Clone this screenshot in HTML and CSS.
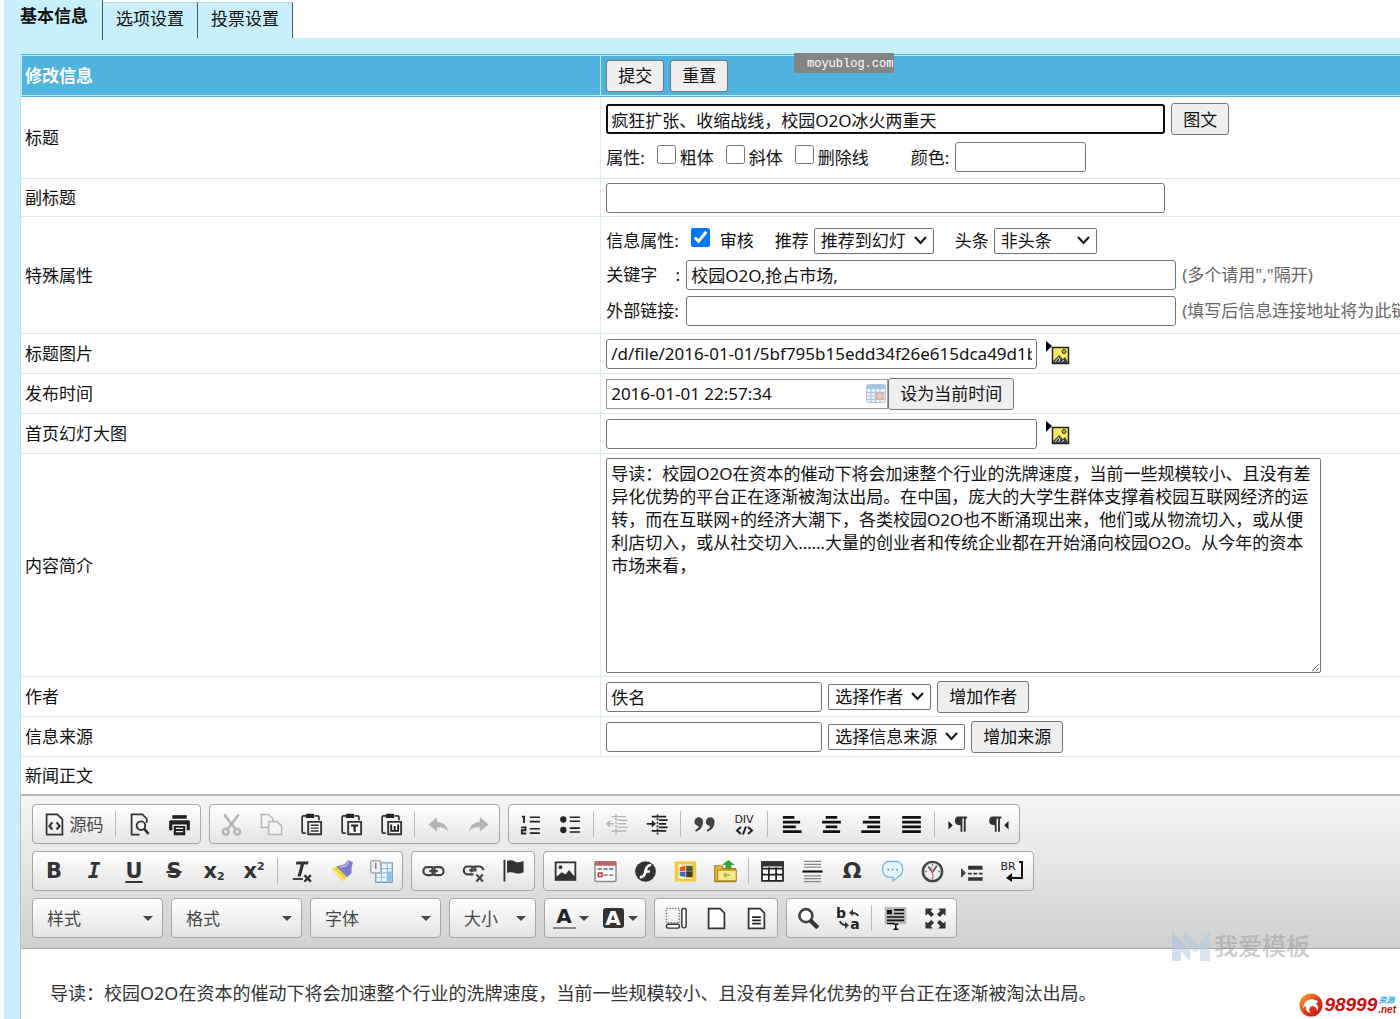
FILE: index.html
```html
<!DOCTYPE html>
<html lang="zh-CN">
<head>
<meta charset="utf-8">
<title>修改信息</title>
<link rel="stylesheet" href="styles.css">
</head>
<body>
<svg class="sprite" aria-hidden="true">
  <defs>
    <linearGradient id="g-ball" x1="0" y1="0" x2="1" y2="1"><stop offset="0" stop-color="#f9b233"/><stop offset=".5" stop-color="#e2401b"/><stop offset="1" stop-color="#b50d12"/></linearGradient>
  </defs>
  <symbol id="source" viewBox="0 0 16 16"><path d="M2.500 1h7.500L13.500 4.500V15h-11z" fill="none" stroke="#333" stroke-width="1.200"/><path d="M6.500 6.500L4.500 9l2 2.500M9.500 6.500l2 2.500-2 2.500" fill="none" stroke="#333" stroke-width="1.500"/></symbol>
  <symbol id="preview" viewBox="0 0 16 16"><path d="M8 15H2.500V1H10l3 3v3" fill="none" stroke="#333" stroke-width="1.200"/><circle cx="9" cy="8.800" r="3" fill="none" stroke="#333" stroke-width="1.300"/><path d="M11.300 11l3 3.500" stroke="#333" stroke-width="1.800"/></symbol>
  <symbol id="print" viewBox="0 0 16 16"><path d="M3 1.500h10V4H3z" fill="#222"/><path d="M1.500 5h13l.7.700V12H13V8H3v4H.8V5.700z" fill="#222"/><path d="M4 9h8v6.500H4z" fill="#222"/><path d="M5.500 10.700h5M5.500 13h5" stroke="#eee" stroke-width=".9"/></symbol>
  <symbol id="cut" viewBox="0 0 16 16"><g fill="none" stroke="#b5b5b5" stroke-width="1.800"><path d="M3 1l7.500 10M13 1L5.500 11"/><circle cx="4" cy="13" r="2"/><circle cx="12" cy="13" r="2"/></g></symbol>
  <symbol id="copy" viewBox="0 0 16 16"><g fill="#f5f5f5" stroke="#b9b9b9" stroke-width="1.100"><path d="M1 10V1h5l3 3v6z"/><path d="M6 6h6l3 3v6H6z"/></g></symbol>
  <symbol id="clip" viewBox="0 0 16 16"><path d="M4 2H2.500Q1.500 2 1.500 3v10q0 1 1 1H4M10.500 2h1.500q1.200 0 1.200 1v2" fill="none" stroke="#333" stroke-width="1.200"/><path d="M4 3.500V1.500Q4 .5 5 .5h4q1 0 1 1v2z" fill="#222"/><path d="M5.700 6.200h9v8.600h-9z" fill="#f7f7f7" stroke="#333" stroke-width="1.300"/></symbol>
  <symbol id="paste" viewBox="0 0 16 16"><use href="#clip"/><path d="M7.500 8.500h5.500M7.500 10.500h5.500M7.500 12.500h5.500" stroke="#333"/></symbol>
  <symbol id="paste-text" viewBox="0 0 16 16"><use href="#clip"/><path d="M7.700 8.700h5M10.200 8.700v4.300" stroke="#222" stroke-width="1.500"/></symbol>
  <symbol id="paste-word" viewBox="0 0 16 16"><use href="#clip"/><path d="M7.800 8v4.400h4.800V8M10.200 9v3" stroke="#222" fill="none" stroke-width="1.300"/></symbol>
  <symbol id="undo" viewBox="0 0 16 16"><path d="M1 8l6-5v3q6 0 8 7-3-3.500-8-3v3z" fill="#b5b5b5"/></symbol>
  <symbol id="redo" viewBox="0 0 16 16"><path d="M15 8L9 3v3Q3 6 1 13q3-3.500 8-3v3z" fill="#b5b5b5"/></symbol>
  <symbol id="ol" viewBox="0 0 16 16"><path d="M2 2.500h1.500V7M1.500 10h3v2H2v2.300h3" fill="none" stroke="#222" stroke-width="1.300"/><path d="M7.500 3h7M7.500 6h7M7.500 11h7M7.500 14h7" stroke="#222" stroke-width="1.100"/></symbol>
  <symbol id="ul" viewBox="0 0 16 16"><circle cx="3" cy="4.500" r="2.200" fill="#222"/><circle cx="3" cy="11.800" r="2.200" fill="#222"/><path d="M7.500 3h7M7.500 5.700h7M7.500 10.500h7M7.500 13.200h7" stroke="#222" stroke-width="1.100"/></symbol>
  <symbol id="outdent" viewBox="0 0 16 16"><path d="M7 1v14" stroke="#b5b5b5" stroke-width="1.200" stroke-dasharray="1.500 1"/><path d="M4 2.500h10M8 5h7M8 7.500h6M8 10h7M4 12.500h10M.5 7.500h5M3 5.500l-2.500 2 2.500 2" fill="none" stroke="#b5b5b5"/></symbol>
  <symbol id="indent" viewBox="0 0 16 16"><path d="M8 1v14" stroke="#333" stroke-width="1.200" stroke-dasharray="1.500 1"/><path d="M4 2.500h10M9 5h6M9 7.500h5M9 10h6M4 12.500h10M.5 7.500h5" stroke="#222" stroke-width="1.200"/><path d="M4 5l3 2.500L4 10z" fill="#222"/></symbol>
  <symbol id="quote" viewBox="0 0 16 16"><path id="q1" d="M4 3a3 3 0 0 1 3 3q0 5-5 7l-.5-1Q4 10.500 4 9a3 3 0 0 1 0-6z" fill="#444"/><use href="#q1" x="8"/></symbol>
  <symbol id="left" viewBox="0 0 16 16"><path d="M2 3h8M2 6.300h12M2 9.600h9M2 13h13" stroke="#111" stroke-width="1.900"/></symbol>
  <symbol id="center" viewBox="0 0 16 16"><path d="M4 3h8M1.500 6.300h13M4 9.600h8M2 13h12" stroke="#111" stroke-width="1.900"/></symbol>
  <symbol id="right" viewBox="0 0 16 16"><path d="M6 3h8M2 6.300h12M5 9.600h9M1 13h13" stroke="#111" stroke-width="1.900"/></symbol>
  <symbol id="justify" viewBox="0 0 16 16"><path d="M1.500 3h13M1.500 6.300h13M1.500 9.600h13M1.500 13h13" stroke="#111" stroke-width="1.900"/></symbol>
  <symbol id="para" viewBox="0 0 16 16"><path d="M7.500 2.500H14v1.300h-1V13h-1.300V3.800h-1V13H9.400V8.500Q5.500 8.500 5.500 5.500 5.500 3 7.500 2.500z" fill="#333"/></symbol>
  <symbol id="ltr" viewBox="0 0 16 16"><use href="#para"/><path d="M1 5.500l3 3-3 3z" fill="#222"/></symbol>
  <symbol id="rtl" viewBox="0 0 16 16"><use href="#para" x="-4"/><path d="M15 5.500l-3 3 3 3z" fill="#222"/></symbol>
  <symbol id="clear" viewBox="0 0 16 16"><path d="M4.500 1h8.500l-.6 2.200H9.800L7.500 11.500H5.200l2.300-8.300H4z" fill="#333"/><path d="M2 13.200h7" stroke="#333" stroke-width="1.300"/><path d="M10 10.500l4.500 4.500M14.500 10.500L10 15" stroke="#333" stroke-width="1.600"/></symbol>
  <symbol id="brush" viewBox="0 0 16 16"><path d="M1 6l8 9 3-4-6-7z" fill="#f6cf2a"/><path d="M1 6l8 9 1-1.500L3 5.500z" fill="#fbe873"/><path d="M4.500 4.500L10 3l2.500-3L16 1.500 15 5v4l-3 3z" fill="#7f7dc9"/><path d="M7 5l4-1 2-3" stroke="#b6b5ea" stroke-width="1.300" fill="none"/></symbol>
  <symbol id="template" viewBox="0 0 16 16"><path d="M4 2h11.500v13.500H4z" fill="#f2f9ff" stroke="#72a5c9"/><path d="M4 6h11M4 9h11M4 12h11M8 3v12M12 3v12" stroke="#8dc1e4" stroke-width=".8"/><path d="M12 8h3v7h-3z" fill="#88c1ee"/><rect x=".5" y=".5" width="7" height="8.500" rx="1" fill="#eee" stroke="#aaa"/><path d="M4 2v4" stroke="#777"/></symbol>
  <symbol id="link" viewBox="0 0 16 16"><g fill="none" stroke="#444" stroke-width="1.500"><rect x="1" y="5" width="8" height="5.500" rx="2.700"/><rect x="7" y="5" width="8" height="5.500" rx="2.700"/><path d="M5 7.700h6"/></g></symbol>
  <symbol id="unlink" viewBox="0 0 16 16"><g fill="none" stroke="#444" stroke-width="1.500"><path d="M8 10H4a2.600 2.600 0 0 1 0-5.500h3a2.600 2.600 0 0 1 2.500 2.700M7 8.500a2.600 2.600 0 0 1 2-4h3.500q2.300.5 2.300 2.700M5 7.200h5"/><path d="M10 10l4.500 5M14.500 10L10 15"/></g></symbol>
  <symbol id="flag" viewBox="0 0 16 16"><path d="M1.700 0v15" stroke="#333" stroke-width="1.300"/><path d="M3.500.5q3-1 5.500.5t6-.5v8q-3 1.500-6 .5t-5.500 0z" fill="#333"/></symbol>
  <symbol id="image" viewBox="0 0 16 16"><path d="M.5 1h15v13.500H.5z" fill="#333"/><path d="M1.800 2.300h12.400v9.200L10.500 7 8 10 5.500 8.500l-3.700 3z" fill="#f5f5f5"/><circle cx="4.500" cy="5" r="1.300" fill="#333"/></symbol>
  <symbol id="form" viewBox="0 0 16 16"><rect x=".7" y="1.200" width="14.600" height="13.800" rx="1" fill="#fafafa" stroke="#888"/><path d="M.5 1h15v3H.5z" fill="#b66"/><path d="M2.500 6.200h3M6.500 6.200h3M10.500 6.200h3M6.500 10.500h3M10.500 10.500h3" stroke="#667"/><path d="M3 9h2.500v2.500H3z" fill="none" stroke="#c33"/></symbol>
  <symbol id="flash" viewBox="0 0 16 16"><circle cx="8" cy="8" r="7.200" fill="#333"/><path d="M12 3.500q-3 0-3.800 3.500l-.5 2q-.7 3-3.700 3M7 8h4" fill="none" stroke="#fff" stroke-width="1.800"/></symbol>
  <symbol id="media" viewBox="0 0 16 16"><path d="M.5 1h15v14H.5z" fill="#f3c93b"/><path d="M3 3h10v10H3z" fill="#fdf3c6"/><path d="M4 5l4-1v3.500l-4 .5z" fill="#e6572c"/><path d="M8.500 4H13v4H8.500z" fill="#435f36"/><path d="M4 8.500l4-.5v4l-4-1z" fill="#3f6cc4"/><path d="M8.500 8H13v4H8.500z" fill="#453820"/></symbol>
  <symbol id="upload" viewBox="0 0 16 16"><path d="M.5 4h5l1 2h8.500v9H.5z" fill="#e9b934" stroke="#9b7a22" stroke-width=".8"/><path d="M2.500 7h13v7.500h-13z" fill="#fbe789" stroke="#b48d24" stroke-width=".8"/><path d="M8 5.500V3.500H5.500L10 0l4.500 3.500H12v2z" fill="#32a332"/><path d="M7 10.500h4M8.500 9L7 10.500 8.500 12" fill="none" stroke="#8ac35b" stroke-width="1.200"/></symbol>
  <symbol id="table" viewBox="0 0 16 16"><path d="M.7 1.500h14.600v13H.7zM.7 6h14.600M.7 10.200h14.600M5.500 5v9.500M10.500 5v9.500" fill="#fff" stroke="#222" stroke-width="1.200"/><path d="M.1 1h15.800v3.500H.1z" fill="#333"/></symbol>
  <symbol id="hr" viewBox="0 0 16 16"><path d="M2 1h12M2 3h12M2 5h12M2 11h12M2 13h12M2 15h12" stroke="#888" stroke-width=".8"/><path d="M1 8h14" stroke="#111" stroke-width="1.500"/></symbol>
  <symbol id="smile" viewBox="0 0 16 16"><path d="M4.500 1h7Q15 2.500 15 6.500T11.500 12l-3 2.500V12H5Q1 10.500 1 6.500T4.500 1z" fill="#e9f7fd" stroke="#7abcdc"/><path d="M4.500 6.700h1.200M7.500 6.700h1.200M10.500 6.700h1.200" stroke="#5b9fc0" stroke-width="1.200"/></symbol>
  <symbol id="clock" viewBox="0 0 16 16"><circle cx="8" cy="8" r="6.700" fill="#eee" stroke="#444" stroke-width="1.700"/><path d="M8 8.500L5 4.500M8 8.500L11 4" stroke="#555" stroke-width="1.100"/><path d="M7 5l1.500 7" stroke="#d77"/><path d="M8 2.500V4M8 12v1.500M2.500 8H4M12 8h1.500" stroke="#777"/></symbol>
  <symbol id="pagebreak" viewBox="0 0 16 16"><path d="M0 5.500L3.500 9 0 12.500z" fill="#444"/><path d="M5 4h10v2.800H5zM5 12h10v2.500H5z" fill="#333"/><path d="M5 9.400h2.500M8.700 9.400h2.600M12.500 9.400H15" stroke="#333" stroke-width="1.200"/></symbol>
  <symbol id="page" viewBox="0 0 16 16"><path d="M2.500 1.200h8l3 3v10.600h-11z" fill="#fff" stroke="#333" stroke-width="1.200"/></symbol>
  <symbol id="doc" viewBox="0 0 16 16"><use href="#page"/><path d="M5 7h6M5 9.300h6M5 11.600h6" stroke="#222" stroke-width="1.200"/></symbol>
  <symbol id="blocks" viewBox="0 0 16 16"><path d="M1 1h9v10H1z" fill="none" stroke="#777" stroke-dasharray="1 1"/><rect x="11.700" y="1" width="3" height="13.500" rx="1.200" fill="#fff" stroke="#333"/><rect x="1" y="12" width="9" height="2.700" rx="1.200" fill="#fff" stroke="#333"/></symbol>
  <symbol id="find" viewBox="0 0 16 16"><circle cx="6.200" cy="6" r="4.500" fill="#fff" stroke="#444" stroke-width="1.800"/><path d="M9.500 9.500l5 5" stroke="#333" stroke-width="3"/></symbol>
  <symbol id="selectall" viewBox="0 0 16 16"><path d="M.5 0h15v12H.5z" fill="#bbb"/><path d="M2 2h3.500v3H2z" fill="#111"/><path d="M7 2h7M7 4.500h7M2 7h12M2 9.300h12M2 11.500h5" stroke="#111" stroke-width="1.100"/><path d="M6.500 12h3.500M6.500 15.500h3.500M8.200 12v3.500" stroke="#111" stroke-width="1.100"/></symbol>
  <symbol id="max" viewBox="0 0 16 16"><path id="mx" d="M1 1h5L4.700 2.700 7 5 5 7 2.700 4.700 1 6z" fill="#333"/><use href="#mx" transform="rotate(90 8 8)"/><use href="#mx" transform="rotate(180 8 8)"/><use href="#mx" transform="rotate(270 8 8)"/></symbol>
  <symbol id="pick" viewBox="0 0 26 25"><path d="M1 0l6 5-6 6z" fill="#000"/><path d="M7.500 6.500h16v16h-16z" fill="#f6ec62" stroke="#222" stroke-width="1.500"/><path d="M8 22v-2l6-6 4 4 2-2 3 5v1z" fill="#444"/><path d="M10 21l4-5M14 21l1-4M17 21l2-2" stroke="#ddd"/><circle cx="19" cy="10.500" r="2" fill="#bba82a" stroke="#333"/></symbol>
  <symbol id="calendar" viewBox="0 0 20 20"><rect x=".5" y=".5" width="19" height="18" rx="2" fill="#e8f0f8" stroke="#b5c8dc"/><path d="M1 1h18v4H1z" fill="#a9c1e2"/><path d="M1 8.500h18M1 12h18M1 15.500h18M5 5v13M9.500 5v13M14 5v13" stroke="#afc1da"/><path d="M10 9h8v6h-8z" fill="#ebb09c"/><path d="M14 9v6M10 12h8" stroke="#f6d8cc"/></symbol>
</svg>

<nav class="tabs">
  <a class="tab tab-active" href="#base">基本信息</a>
  <a class="tab" href="#options">选项设置</a>
  <a class="tab" href="#vote">投票设置</a>
</nav>

<form class="panel" id="base">
  <span class="site-tag">moyublog.com</span>
  <table class="info">
    <colgroup><col class="col-name"><col></colgroup>
    <thead>
      <tr><th>修改信息</th><th><div class="line"><button type="button" class="btn">提交</button><button type="reset" class="btn">重置</button></div></th></tr>
    </thead>
    <tbody>
      <tr class="row-title">
        <td><label for="title">标题</label></td>
        <td><div class="stack">
          <div class="line"><input id="title" class="field w-title focused" value="疯狂扩张、收缩战线，校园O2O冰火两重天"><button type="button" class="btn">图文</button></div>
          <div class="line attrs">
            <span>属性:</span>
            <label class="check"><input type="checkbox">粗体</label>
            <label class="check"><input type="checkbox">斜体</label>
            <label class="check"><input type="checkbox">删除线</label>
            <label class="line color-pick">颜色:<input class="field w-color"></label>
          </div>
        </div></td>
      </tr>
      <tr class="row-sub"><td><label for="sub">副标题</label></td><td><div class="line"><input id="sub" class="field w-title"></div></td></tr>
      <tr class="row-special">
        <td>特殊属性</td>
        <td><div class="stack">
          <div class="line special">
            <span>信息属性:</span>
            <label class="check audit"><input type="checkbox" checked>审核</label>
            <label class="line pick-label">推荐<select class="sel w-rec"><option>推荐到幻灯</option></select></label>
            <label class="line pick-label">头条<select class="sel w-short"><option>非头条</option></select></label>
          </div>
          <div class="line"><label class="name" for="keys"><span>关键字</span><span>:</span></label><input id="keys" class="field w-keys" value="校园O2O,抢占市场,"><span class="hint">(多个请用","隔开)</span></div>
          <div class="line"><label class="name" for="ext"><span>外部链接:</span></label><input id="ext" class="field w-keys"><span class="hint">(填写后信息连接地址将为此链接)</span></div>
        </div></td>
      </tr>
      <tr><td><label for="pic">标题图片</label></td><td><div class="line pic-line"><input id="pic" class="field w-pic" value="/d/file/2016-01-01/5bf795b15edd34f26e615dca49d1bd6e.jpg"><a href="#pic" aria-label="选择图片"><svg class="pick"><use href="#pick"/></svg></a></div></td></tr>
      <tr><td><label for="time">发布时间</label></td><td><div class="line time-line"><span class="time-box"><input id="time" value="2016-01-01 22:57:34"><svg><use href="#calendar"/></svg></span><button type="button" class="btn">设为当前时间</button></div></td></tr>
      <tr><td><label for="slide">首页幻灯大图</label></td><td><div class="line pic-line"><input id="slide" class="field w-pic"><a href="#slide" aria-label="选择图片"><svg class="pick"><use href="#pick"/></svg></a></div></td></tr>
      <tr class="row-intro"><td><label for="intro">内容简介</label></td><td><textarea id="intro" class="intro">导读：校园O2O在资本的催动下将会加速整个行业的洗牌速度，当前一些规模较小、且没有差异化优势的平台正在逐渐被淘汰出局。在中国，庞大的大学生群体支撑着校园互联网经济的运转，而在互联网+的经济大潮下，各类校园O2O也不断涌现出来，他们或从物流切入，或从便利店切入，或从社交切入……大量的创业者和传统企业都在开始涌向校园O2O。从今年的资本市场来看，</textarea></td></tr>
      <tr><td><label for="author">作者</label></td><td><div class="line"><input id="author" class="field w-name" value="佚名"><select class="sel w-short" aria-label="选择作者"><option>选择作者</option></select><button type="button" class="btn">增加作者</button></div></td></tr>
      <tr><td><label for="from">信息来源</label></td><td><div class="line"><input id="from" class="field w-name"><select class="sel w-from" aria-label="选择信息来源"><option>选择信息来源</option></select><button type="button" class="btn">增加来源</button></div></td></tr>
      <tr class="row-body"><td colspan="2">新闻正文</td></tr>
    </tbody>
  </table>

  <section class="editor" aria-label="新闻正文">
    <div class="toolbar">
      <div class="bar">
        <div class="group">
          <button type="button" class="source"><svg><use href="#source"/></svg>源码</button><i></i>
          <button type="button" aria-label="预览"><svg><use href="#preview"/></svg></button>
          <button type="button" aria-label="打印"><svg><use href="#print"/></svg></button>
        </div>
        <div class="group">
          <button type="button" aria-label="剪切"><svg><use href="#cut"/></svg></button>
          <button type="button" aria-label="复制"><svg><use href="#copy"/></svg></button>
          <button type="button" aria-label="粘贴"><svg><use href="#paste"/></svg></button>
          <button type="button" aria-label="粘贴为文本"><svg><use href="#paste-text"/></svg></button>
          <button type="button" aria-label="从 Word 粘贴"><svg><use href="#paste-word"/></svg></button><i></i>
          <button type="button" aria-label="撤消"><svg><use href="#undo"/></svg></button>
          <button type="button" aria-label="重做"><svg><use href="#redo"/></svg></button>
        </div>
        <div class="group">
          <button type="button" aria-label="编号列表"><svg><use href="#ol"/></svg></button>
          <button type="button" aria-label="项目列表"><svg><use href="#ul"/></svg></button><i></i>
          <button type="button" aria-label="减少缩进"><svg><use href="#outdent"/></svg></button>
          <button type="button" aria-label="增加缩进"><svg><use href="#indent"/></svg></button><i></i>
          <button type="button" aria-label="块引用"><svg><use href="#quote"/></svg></button>
          <button type="button"><svg viewBox="0 0 23 23"><path d="M8 14l-4 3.500L8 21M15 14l4 3.500-4 3.500M13 13.500l-3 8" fill="none" stroke="#222" stroke-width="2"/><text x="11" y="10" class="t-div">DIV</text></svg></button><i></i>
          <button type="button" aria-label="左对齐"><svg><use href="#left"/></svg></button>
          <button type="button" aria-label="居中"><svg><use href="#center"/></svg></button>
          <button type="button" aria-label="右对齐"><svg><use href="#right"/></svg></button>
          <button type="button" aria-label="两端对齐"><svg><use href="#justify"/></svg></button><i></i>
          <button type="button" aria-label="从左到右"><svg><use href="#ltr"/></svg></button>
          <button type="button" aria-label="从右到左"><svg><use href="#rtl"/></svg></button>
        </div>
      </div>
      <div class="bar">
        <div class="group">
          <button type="button" class="glyph">B</button>
          <button type="button" class="glyph italic">I</button>
          <button type="button" class="glyph under">U</button>
          <button type="button" class="glyph strike">S</button>
          <button type="button" class="glyph">x<sub>2</sub></button>
          <button type="button" class="glyph">x<sup>2</sup></button><i></i>
          <button type="button" aria-label="清除格式"><svg><use href="#clear"/></svg></button>
          <button type="button" aria-label="格式刷"><svg><use href="#brush"/></svg></button>
          <button type="button" aria-label="模板"><svg><use href="#template"/></svg></button>
        </div>
        <div class="group">
          <button type="button" aria-label="超链接"><svg><use href="#link"/></svg></button>
          <button type="button" aria-label="取消超链接"><svg><use href="#unlink"/></svg></button>
          <button type="button" aria-label="锚点"><svg><use href="#flag"/></svg></button>
        </div>
        <div class="group">
          <button type="button" aria-label="图像"><svg><use href="#image"/></svg></button>
          <button type="button" aria-label="表单"><svg><use href="#form"/></svg></button>
          <button type="button" aria-label="Flash"><svg><use href="#flash"/></svg></button>
          <button type="button" aria-label="多媒体"><svg><use href="#media"/></svg></button>
          <button type="button" aria-label="上传附件"><svg><use href="#upload"/></svg></button><i></i>
          <button type="button" aria-label="表格"><svg><use href="#table"/></svg></button>
          <button type="button" aria-label="水平线"><svg><use href="#hr"/></svg></button>
          <button type="button" class="glyph omega">Ω</button>
          <button type="button" aria-label="表情"><svg><use href="#smile"/></svg></button>
          <button type="button" aria-label="时间"><svg><use href="#clock"/></svg></button>
          <button type="button" aria-label="分页符"><svg><use href="#pagebreak"/></svg></button>
          <button type="button"><svg viewBox="0 0 23 23"><text x="7" y="10" class="t-br">BR</text><path d="M18 2h3v16H9" fill="none" stroke="#111" stroke-width="2"/><path d="M11 13l-6 5 6 4z" fill="#111"/></svg></button>
        </div>
      </div>
      <div class="bar">
        <label class="combo"><select aria-label="样式"><option>样式</option></select></label>
        <label class="combo"><select aria-label="格式"><option>格式</option></select></label>
        <label class="combo"><select aria-label="字体"><option>字体</option></select></label>
        <label class="combo combo-size"><select aria-label="大小"><option>大小</option></select></label>
        <div class="group">
          <button type="button" class="menu" aria-label="文本颜色"><svg viewBox="0 0 23 23"><text x="11" y="16" class="t-a">A</text><path d="M0 21h23" stroke="#888" stroke-width="2"/></svg></button>
          <button type="button" class="menu" aria-label="背景颜色"><svg viewBox="0 0 23 23"><rect x="1" y="1" width="21" height="20" rx="3" fill="#333"/><text x="11" y="18" class="t-a inv">A</text></svg></button>
        </div>
        <div class="group">
          <button type="button" aria-label="显示区块"><svg><use href="#blocks"/></svg></button>
          <button type="button" aria-label="新建"><svg><use href="#page"/></svg></button>
          <button type="button" aria-label="文档"><svg><use href="#doc"/></svg></button>
        </div>
        <div class="group">
          <button type="button" aria-label="查找"><svg><use href="#find"/></svg></button>
          <button type="button" aria-label="替换"><svg viewBox="0 0 23 23"><text x="4" y="11" class="t-r">b</text><text x="18" y="22" class="t-r">a</text><path d="M21 9q-1-3-6-3M3 14q1 4 6 4" fill="none" stroke="#333" stroke-width="2"/><path d="M16 2l-4 4 4 3zM8 15l4 3-4 4z" fill="#333"/></svg></button><i></i>
          <button type="button" aria-label="全选"><svg><use href="#selectall"/></svg></button>
          <button type="button" aria-label="全屏"><svg><use href="#max"/></svg></button>
        </div>
      </div>
    </div>
    <div class="content" contenteditable="true"><p>导读：校园O2O在资本的催动下将会加速整个行业的洗牌速度，当前一些规模较小、且没有差异化优势的平台正在逐渐被淘汰出局。</p></div>
  </section>
</form>

<div class="mark-template"><svg viewBox="0 0 38 30"><path d="M0 0l18 19v11L9 20v10H0z" fill="#a9bfe0"/><path d="M12 0l14 14L38 0v30H28V17l-5 5L12 11z" fill="#b4c8e6"/></svg><span>我爱模板</span></div>
<div class="mark-net"><svg viewBox="0 0 24 24"><circle cx="12" cy="12" r="11.500" fill="url(#g-ball)"/><path d="M4 16q0-9 9-10l6 2-2 3q4 3 1 7 0-4-4-5l-3 1q-2 4 1 6-6-1-5-7-2 0-3 3z" fill="#fff"/></svg><span class="num">98999</span><span class="tail"><b>资源</b><em>.net</em></span></div>
</body>
</html>
```
FILE: styles.css
```css
* { box-sizing: border-box; }
html { height: 100%; }
body {
  position: relative;
  display: flex;
  flex-direction: column;
  min-height: 100%;
  margin: 0;
  padding-left: 4px;
  overflow: hidden;
  background: #fff;
  color: #111;
  font: 17px/23px "Noto Sans", "Noto Sans CJK SC", sans-serif;
}
button, input, select, textarea { margin: 0; color: inherit; font: inherit; }
a { color: inherit; text-decoration: none; }
.sprite { position: absolute; width: 0; height: 0; }

.tabs { display: flex; align-items: flex-end; height: 38px; }
.tab {
  height: 36px;
  padding: 4px 13px 0;
  border-top: 1px solid #b4d5e0;
  border-right: 1px solid #4d5a5e;
  background: #c8f0fc;
}
.tab-active {
  z-index: 1;
  height: 40px;
  margin-bottom: -2px;
  padding: 4px 14px 0 16px;
  border-top: 0;
  font-weight: bold;
}

.panel {
  position: relative;
  display: flex;
  flex: 1;
  flex-direction: column;
  padding: 16px 0 0 16px;
  background: #c8f0fc;
}
.site-tag {
  position: absolute;
  top: 15px;
  left: 790px;
  width: 100px;
  height: 20px;
  padding-left: 13px;
  background: #858585;
  color: #fff;
  font: 12px/22px "Liberation Mono", monospace;
}

.info {
  width: 100%;
  border-collapse: separate;
  border-spacing: 0;
  border-left: 1px solid #b9def0;
  background: #fff;
  table-layout: fixed;
}
.col-name { width: 42%; }
.info th {
  height: 43px;
  padding: 0 4px;
  border: solid #52b3dd;
  border-width: 1px 0;
  background: #50b2de;
  box-shadow: inset 1px 1px #bde9fa, inset 0 -1px #bde9fa;
  color: #fff;
  text-align: left;
}
.info th + th { padding-left: 6px; }
.info th .btn { color: #111; font-weight: normal; }
.info td {
  height: 40px;
  padding: 0 4px;
  border-bottom: 1px solid #dbe9f1;
  overflow: hidden;
}
.info td + td { padding: 0 0 0 5px; border-left: 1px solid #dfebf2; }
.info .row-title td { height: 82px; }
.info .row-sub td { height: 38px; }
.info .row-special td { height: 117px; }
.info .row-special td + td { padding-top: 3px; }
.info .row-intro td { height: 223px; }
.info .row-body td { height: 37px; border-bottom: 0; }

.line { display: flex; align-items: center; gap: 6px; white-space: nowrap; }
.line > * { flex: none; }
.stack { display: flex; flex-direction: column; gap: 7px; }
.row-special .stack { gap: 6px; }
.attrs { gap: 12px; }
.check { display: flex; align-items: center; gap: 4px; }
.check input { width: 19px; height: 19px; margin-bottom: 6px; }
.color-pick { margin-left: 30px; }
.special { gap: 21px; }
.special .audit { gap: 10px; margin-left: -9px; }
.pick-label { gap: 5px; }
.name { display: flex; justify-content: space-between; width: 74px; }
.hint { color: #666; }

.field {
  height: 30px;
  padding: 0 4px;
  border: 1px solid #767676;
  border-radius: 3px;
  background: #fff;
}
.focused { padding: 0 3px; border: 2px solid #101010; outline: 0; }
.w-title { width: 559px; }
.w-color { width: 131px; }
.w-keys { width: 490px; }
.w-pic { width: 431px; }
.w-name { width: 216px; }
.btn {
  height: 32px;
  padding: 0 11px;
  border: 1px solid #767676;
  border-radius: 3px;
  background: #efefef;
}
.sel {
  height: 26px;
  padding: 0 6px;
  border: 1px solid #767676;
  border-radius: 2px;
  background: #fff url("data:image/svg+xml,%3Csvg xmlns='http://www.w3.org/2000/svg' width='13' height='9'%3E%3Cpath d='M1 1l5.500 6L12 1' fill='none' stroke='%23111' stroke-width='2'/%3E%3C/svg%3E") no-repeat right 6px center;
  line-height: 24px;
  appearance: none;
}
.w-rec { width: 120px; }
.w-short { width: 103px; }
.w-from { width: 137px; }
.pic-line { gap: 8px; }
.pick { display: block; width: 26px; height: 25px; }
.time-line { gap: 0; }
.time-box {
  display: flex;
  align-items: center;
  width: 282px;
  height: 30px;
  padding: 0 1px 0 4px;
  border: 1px solid #999;
}
.time-box input { flex: 1; min-width: 0; padding: 0; border: 0; }
.time-box svg { width: 20px; height: 20px; }
.intro {
  display: block;
  width: 715px;
  height: 215px;
  padding: 3px 4px;
  border: 1px solid #767676;
  border-radius: 2px;
}

.editor {
  display: flex;
  flex: 1;
  flex-direction: column;
  border-left: 1px solid #b6c4cc;
  background: #fff;
}
.toolbar {
  display: flex;
  flex-direction: column;
  gap: 7px;
  padding: 8px 11px 10px;
  border-top: 2px solid #b6b6b6;
  border-bottom: 1px solid #a9a9a9;
  background: linear-gradient(#f5f5f5, #cfd1cf);
}
.bar { display: flex; gap: 8px; }
.group, .combo {
  display: flex;
  align-items: center;
  height: 40px;
  padding: 0 1px;
  border: 1px solid #a6a6a6;
  border-radius: 4px;
  background: linear-gradient(#fff, #e4e4e4);
}
.group button {
  display: flex;
  align-items: center;
  justify-content: center;
  width: 40px;
  height: 38px;
  padding: 0;
  border: 0;
  background: none;
}
.group svg { flex: none; width: 23px; height: 23px; }
.group i { width: 1px; height: 26px; margin: 0 3px; background: #b9b9b9; }
.group .source { gap: 4px; width: 78px; color: #474747; }
.group .glyph { color: #333; font: bold 21px/24px "DejaVu Sans", sans-serif; }
.group .italic { font-family: "DejaVu Sans Mono", monospace; font-style: italic; }
.group .under { text-decoration: underline; text-underline-offset: 3px; }
.group .strike { text-decoration: line-through; }
.group .omega { font-size: 22px; }
.glyph sub, .glyph sup { font-size: 11px; line-height: 1; }
.glyph sub { align-self: flex-end; margin-bottom: 8px; }
.glyph sup { align-self: flex-start; margin-top: 9px; }
.group .menu { gap: 3px; width: 49px; }
.menu::after, .combo::after {
  border: 5px solid transparent;
  border-top-color: #474747;
  border-bottom: 0;
  content: "";
}
.combo { width: 131px; padding-right: 9px; }
.combo-size { width: 87px; }
.combo select {
  flex: 1;
  min-width: 0;
  height: 38px;
  padding: 0 0 0 13px;
  border: 0;
  background: none;
  color: #474747;
  appearance: none;
}
.t-div, .t-br, .t-a, .t-r { fill: #222; font-family: "DejaVu Sans", sans-serif; text-anchor: middle; }
.t-div { font-size: 11px; }
.t-br { font-size: 11px; }
.t-a { font-size: 20px; font-weight: bold; }
.t-r { font-size: 14px; font-weight: bold; }
.inv { fill: #fff; }

.content { flex: 1; padding: 30px 29px 0; color: #333; outline: 0; }
.content p { margin: 0; font-size: 18px; line-height: 28px; white-space: nowrap; }

.mark-template {
  position: absolute;
  right: 90px;
  bottom: 56px;
  display: flex;
  align-items: center;
  gap: 4px;
  color: #999;
  font-size: 24px;
  font-weight: 500;
  line-height: 34px;
  opacity: .5;
}
.mark-template svg { width: 38px; height: 30px; }
.mark-net {
  position: absolute;
  right: 4px;
  bottom: 0;
  display: flex;
  align-items: center;
  gap: 1px;
  height: 28px;
  color: #cf0d0d;
  font-family: "Liberation Sans", sans-serif;
  font-style: italic;
  font-weight: bold;
}
.mark-net svg { width: 24px; height: 24px; }
.num { font-size: 19px; line-height: 28px; }
.tail { display: flex; flex-direction: column; font-size: 10px; line-height: 10px; }
.tail b { color: #2aa5e0; font: italic bold 8px/10px "Noto Sans CJK SC", sans-serif; }
```
